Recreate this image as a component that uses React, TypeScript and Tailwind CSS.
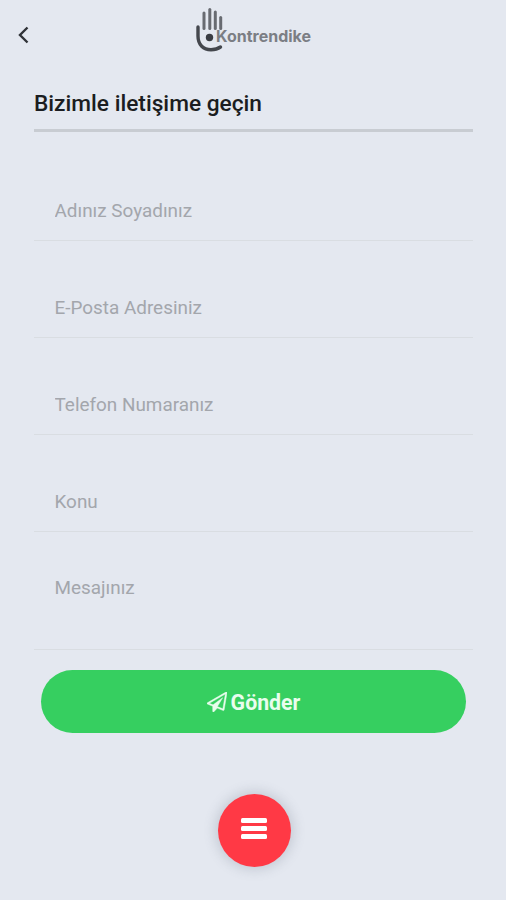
const fields = [
  { name: "name", type: "text", label: "Adınız Soyadınız" },
  { name: "email", type: "email", label: "E-Posta Adresiniz" },
  { name: "phone", type: "tel", label: "Telefon Numaranız" },
  { name: "subject", type: "text", label: "Konu" },
];

function Logo() {
  return (
    <svg width="130" height="50" viewBox="0 0 130 50" fill="none" aria-label="Kontrendike">
      <g stroke="#686b71" strokeWidth="3" strokeLinecap="round">
        <path d="M16 7V22.5" />
        <path d="M21.8 3.5V22.5" />
        <path d="M27.3 6V22.5" />
        <path d="M32.7 11.5V22.5" />
      </g>
      <path d="M10 21V30C10 39 15.5 43.7 23 43.7C27 43.7 30 42.8 32.5 41" stroke="#44474d" strokeWidth="3.4" strokeLinecap="round" />
      <circle cx="21.5" cy="31.5" r="3.7" fill="#3a3d43" />
      <text
        x="28"
        y="36"
        textLength="95"
        lengthAdjust="spacingAndGlyphs"
        fill="#7b7e84"
        className="font-['Inter',sans-serif] text-[16px] font-bold"
      >
        Kontrendike
      </text>
    </svg>
  );
}

function PaperPlane() {
  return (
    <svg width="20" height="20" viewBox="0 0 1792 1792" fill="currentColor" stroke="currentColor" strokeWidth="40" aria-hidden="true">
      <path d="M1764 11q33 24 27 64l-256 1536q-5 29-32 45-14 8-31 8-11 0-24-5l-527-215-298 327q-18 21-47 21-14 0-23-4-19-7-30-23.500t-11-36.500v-452l-472-193q-37-14-40-55-3-39 32-59l1664-960q35-21 68 2zm-342 1499l221-1323-1434 827 336 137 863-639-478 797z" />
    </svg>
  );
}

export default function App() {
  return (
    <div className="min-h-[900px] bg-[#e4e8f0] font-['Roboto',sans-serif]">
      <header className="grid grid-cols-[1fr_130px_1fr] h-[70px] pt-[6px]">
        <button type="button" aria-label="Geri" className="justify-self-start self-start pl-[18px] pt-[20px]">
          <svg width="11" height="18" viewBox="0 0 11 18" fill="none" stroke="#303338" strokeWidth="2.4">
            <path d="M9.5 1.5L2 9L9.5 16.5" />
          </svg>
        </button>
        <Logo />
      </header>

      <main className="pl-[34px] pr-[33px]">
        <h1 className="h-[62px] pt-[20px] border-b-3 border-[#c8ccd2] text-[22.7px] leading-[28px] font-medium text-[#1b1d21]">
          Bizimle iletişime geçin
        </h1>

        <form className="pt-[12px]">
          {fields.map((field) => (
            <input
              key={field.name}
              name={field.name}
              type={field.type}
              placeholder={field.label}
              className="block w-full h-[97px] pt-[37px] pl-[20.5px] border-b border-[#d9dde2] text-[18.9px] placeholder:text-[#a3a6ac] outline-none"
            />
          ))}
          <textarea
            name="message"
            placeholder="Mesajınız"
            className="block w-full h-[118px] pt-[42px] pl-[20.5px] border-b border-[#d9dde2] text-[18.9px] leading-[28px] placeholder:text-[#a3a6ac] outline-none resize-none"
          />
          <button
            type="button"
            className="flex items-center justify-center gap-[4px] w-[425px] h-[63px] mt-[20px] ml-[7px] rounded-full bg-[#36cf60] text-[21.3px] font-bold text-[#e9fdee]"
          >
            <PaperPlane />
            <span className="pt-[2px]">Gönder</span>
          </button>
        </form>
      </main>

      <div className="flex justify-center pt-[61px] pl-[3px]">
        <button
          type="button"
          aria-label="Menü"
          className="flex flex-col items-center gap-[3px] size-[73px] pt-[24px] pr-[2px] rounded-full bg-[#ff3945] shadow-[0_0_12px_3px_rgba(90,100,120,0.22)]"
        >
          <span className="w-[26px] h-[5px] rounded-[1.5px] bg-white" />
          <span className="w-[26px] h-[5px] rounded-[1.5px] bg-white" />
          <span className="w-[26px] h-[5px] rounded-[1.5px] bg-white" />
        </button>
      </div>
    </div>
  );
}
